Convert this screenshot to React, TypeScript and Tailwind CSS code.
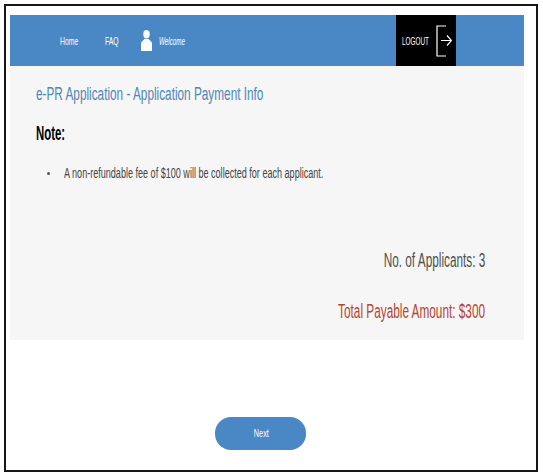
const Squeezed = ({ className = "", children }: { className?: string; children: React.ReactNode }) => (
  <span className={`inline-block whitespace-nowrap ${className}`}>{children}</span>
);

const App = () => {
  return (
    <div className="h-[476px] w-[543px] bg-white pt-1 pl-1 font-['Liberation_Sans',Arial,sans-serif]">
      <div className="flex h-[468px] w-[534px] flex-col border-2 border-[#161616] pt-[9px] pl-1">
        <header className="flex h-[51px] w-[514px] items-center bg-[#4a88c5] text-white">
          <nav className="flex items-center">
            <div className="ml-[50px] w-[45px] text-[11px] leading-4">
              <Squeezed className="origin-left scale-x-[0.62]">Home</Squeezed>
            </div>
            <div className="w-[36px] text-[11px] leading-4">
              <Squeezed className="origin-left scale-x-[0.62]">FAQ</Squeezed>
            </div>
            <svg viewBox="0 0 11 21" className="mt-[-1px] h-[21px] w-[11px] shrink-0" fill="#ffffff">
              <ellipse cx="5.500" cy="4.200" rx="3.200" ry="4.200" />
              <path d="M3.500 9h4L11 12.500V21H0v-8.500z" />
            </svg>
            <div className="ml-[7px] w-[30px] text-[11px] italic leading-4">
              <Squeezed className="origin-left scale-x-[0.57]">Welcome</Squeezed>
            </div>
          </nav>
          <div className="ml-auto mr-[68px] flex h-full w-[60px] items-center bg-black pl-[6px]">
            <div className="w-[34px] text-[11px] leading-4">
              <Squeezed className="origin-left scale-x-[0.58]">LOGOUT</Squeezed>
            </div>
            <svg viewBox="0 0 16 34" className="h-[34px] w-[16px] shrink-0" fill="none" stroke="#ffffff" strokeWidth="1.200">
              <path d="M10 2H1v30h9" />
              <path d="M5 16.500h10.500M11 11.500l4.500 5-4.500 5" />
            </svg>
          </div>
        </header>

        <main className="h-[274px] w-[514px] bg-[#f6f6f6] pt-[18px] pr-[39px] pl-[26px]">
          <h1 className="text-[18px] leading-5 text-[#4f86b4]">
            <Squeezed className="origin-left scale-x-[0.655]">e-PR Application - Application Payment Info</Squeezed>
          </h1>
          <h2 className="mt-[19px] text-[20px] font-bold leading-5 text-black">
            <Squeezed className="origin-left scale-x-[0.57]">Note:</Squeezed>
          </h2>
          <ul className="mt-[22px] text-[#444444]">
            <li className="flex items-center text-[14px] leading-4">
              <span className="ml-[11px] mr-[14px] h-[3px] w-[3px] shrink-0 rounded-full bg-[#555555]" />
              <Squeezed className="origin-left scale-x-[0.647]">
                A non-refundable fee of $100 will be collected for each applicant.
              </Squeezed>
            </li>
          </ul>
          <p className="mt-[69px] text-right text-[20px] leading-5 text-[#505050]">
            <Squeezed className="origin-right scale-x-[0.59]">No. of Applicants: 3</Squeezed>
          </p>
          <p className="mt-[31px] text-right text-[20px] leading-5 text-[#b8432f]">
            <Squeezed className="origin-right scale-x-[0.59]">Total Payable Amount: $300</Squeezed>
          </p>
        </main>

        <div className="mt-[77px] flex w-[500px] justify-center">
          <button className="flex h-[33px] w-[91px] items-center justify-center rounded-[16px] bg-[#4a88c5] pl-[2px] text-[11px] text-white">
            <Squeezed className="origin-center scale-x-[0.66]">Next</Squeezed>
          </button>
        </div>
      </div>
    </div>
  );
};

export default App;
